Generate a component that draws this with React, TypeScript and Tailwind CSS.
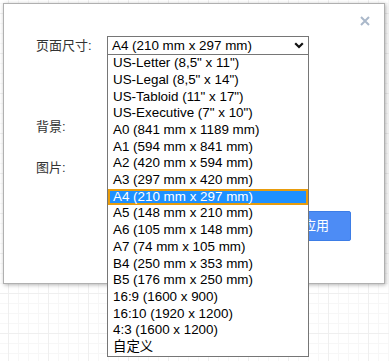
import React from "react";

const sizes = [
  "US-Letter (8,5\" x 11\")",
  "US-Legal (8,5\" x 14\")",
  "US-Tabloid (11\" x 17\")",
  "US-Executive (7\" x 10\")",
  "A0 (841 mm x 1189 mm)",
  "A1 (594 mm x 841 mm)",
  "A2 (420 mm x 594 mm)",
  "A3 (297 mm x 420 mm)",
  "A4 (210 mm x 297 mm)",
  "A5 (148 mm x 210 mm)",
  "A6 (105 mm x 148 mm)",
  "A7 (74 mm x 105 mm)",
  "B4 (250 mm x 353 mm)",
  "B5 (176 mm x 250 mm)",
  "16:9 (1600 x 900)",
  "16:10 (1920 x 1200)",
  "4:3 (1600 x 1200)",
  "自定义",
];

const selected = "A4 (210 mm x 297 mm)";

function PageSizeSelect() {
  return (
    <div className="relative w-[202px]">
      <div className="flex h-[19px] items-center justify-between border border-[#767676] bg-white pl-[4px] pr-[3px] text-[13.4px] text-black">
        <span className="leading-none">{selected}</span>
        <svg width="10" height="7" viewBox="0 0 10 7" className="mr-[1px]">
          <polyline
            points="1.2,1.2 5,5 8.8,1.2"
            fill="none"
            stroke="#111"
            strokeWidth="2.2"
          />
        </svg>
      </div>
      <ul className="absolute left-0 top-[18px] z-10 w-[202px] border border-[#767676] bg-white text-[13.4px] text-black">
        {sizes.map((s) => (
          <li
            key={s}
            className={
              s === selected
                ? "h-[16.7px] border-2 border-[#e89c0c] bg-[#1e90ff] pl-[3px] leading-[12.7px] text-white"
                : "h-[16.7px] pl-[5px] leading-[16.7px]"
            }
          >
            {s}
          </li>
        ))}
      </ul>
    </div>
  );
}

export default function App() {
  return (
    <div className="relative h-[361px] w-[389px] overflow-hidden bg-white bg-[linear-gradient(to_right,#efefef_1px,transparent_1px),linear-gradient(to_bottom,#efefef_1px,transparent_1px),linear-gradient(to_right,#f7f7f7_1px,transparent_1px),linear-gradient(to_bottom,#f7f7f7_1px,transparent_1px)] bg-[size:40px_40px,40px_40px,10px_10px,10px_10px] bg-[position:8px_13px,8px_13px,8px_3px,8px_3px] font-['Liberation_Sans','Noto_Sans_CJK_SC',sans-serif]">
      <div className="absolute left-[3px] top-[3px] h-[281px] w-[382px] border border-[#b0b0b0] bg-white pl-[32px] pr-[33px] pt-[32px] shadow-[1px_1px_4px_rgba(0,0,0,0.3)]">
        <button className="absolute right-[14px] top-[12px] text-[#aab8ca]">
          <svg width="10" height="10" viewBox="0 0 10 10">
            <path d="M1 1 L9 9 M9 1 L1 9" stroke="currentColor" strokeWidth="2" />
          </svg>
        </button>
        <div className="flex items-center">
          <span className="w-[71px] text-[13px] text-[#333]">页面尺寸:</span>
          <PageSizeSelect />
        </div>
        <div className="mt-[62px] flex h-[19px] items-center text-[13px] text-[#333]">
          背景:
        </div>
        <div className="mt-[22px] flex h-[19px] items-center text-[13px] text-[#333]">
          图片:
        </div>
        <div className="mt-[33px] flex justify-end">
          <button className="h-[30px] w-[70px] rounded-[2px] border border-[#3d7de6] bg-[#4d8cf5] text-[13px] text-white">
            应用
          </button>
        </div>
      </div>
    </div>
  );
}
